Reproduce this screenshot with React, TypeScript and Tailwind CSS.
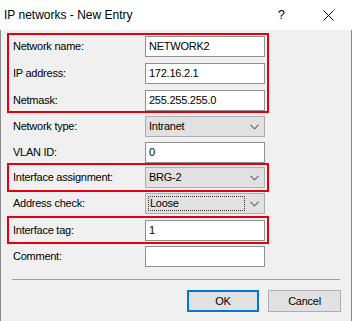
import type { ReactNode } from "react";

const font = { fontFamily: '"Segoe UI", "Liberation Sans", Arial, sans-serif' };

function Chevron() {
  return (
    <svg width="9" height="6" viewBox="0 0 9 6" className="ml-auto mr-[5px]">
      <path d="M0.5 0.8 L4.5 4.8 L8.5 0.8" fill="none" stroke="#606060" strokeWidth="1.1" />
    </svg>
  );
}

function TextBox({ value }: { value: string }) {
  return (
    <div className="flex h-[21px] w-[120px] items-center border border-[#8f8f8f] bg-white pl-[3px]">
      {value}
    </div>
  );
}

function Select({ value, focused }: { value: string; focused?: boolean }) {
  return (
    <div className="flex h-[21px] w-[120px] items-center border border-[#adadad] bg-[#e1e1e1]">
      {focused ? (
        <span className="ml-[2px] flex h-[15px] w-[97px] items-center border border-dotted border-[#333] pl-[1px]">
          {value}
        </span>
      ) : (
        <span className="pl-[3px]">{value}</span>
      )}
      <Chevron />
    </div>
  );
}

function Row({ label, children }: { label: string; children: ReactNode }) {
  return (
    <div className="flex h-[21px] items-center">
      <span className="w-[132px]">{label}</span>
      {children}
    </div>
  );
}

function Group({ children, className = "" }: { children: ReactNode; className?: string }) {
  return (
    <div className={`mx-[6px] flex w-[262px] flex-col border-2 border-[#e3000f] pl-[4px] ${className}`}>
      {children}
    </div>
  );
}

function Plain({ children, className = "" }: { children: ReactNode; className?: string }) {
  return <div className={`ml-[12px] ${className}`}>{children}</div>;
}

export default function App() {
  return (
    <div className="h-[321px] w-[352px] text-[11px] tracking-[-0.25px] text-black" style={font}>
      <div className="flex h-[30px] items-center bg-white pl-[4px] text-[12px] tracking-normal">
        <span>IP networks - New Entry</span>
        <span className="ml-auto mr-[38px] text-[13px]">?</span>
        <svg width="11" height="11" viewBox="0 0 11 11" className="mr-[18px]">
          <path d="M0.5 0.5 L10.5 10.5 M10.5 0.5 L0.5 10.5" stroke="#000" strokeWidth="1" />
        </svg>
      </div>
      <div className="flex h-[291px] flex-col border-x border-[#8a8a8a] bg-[#f0f0f0]">
        <Group className="mt-[3px] gap-[6px] pt-[1px]">
          <Row label="Network name:">
            <TextBox value="NETWORK2" />
          </Row>
          <Row label="IP address:">
            <TextBox value="172.16.2.1" />
          </Row>
          <Row label="Netmask:">
            <TextBox value="255.255.255.0" />
          </Row>
        </Group>
        <Plain className="mt-[3px]">
          <Row label="Network type:">
            <Select value="Intranet" />
          </Row>
        </Plain>
        <Plain className="mt-[5px]">
          <Row label="VLAN ID:">
            <TextBox value="0" />
          </Row>
        </Plain>
        <Group className="py-[2px]">
          <Row label="Interface assignment:">
            <Select value="BRG-2" />
          </Row>
        </Group>
        <Plain className="mt-[1px]">
          <Row label="Address check:">
            <Select value="Loose" focused />
          </Row>
        </Plain>
        <Group className="mt-[2px] pb-[1px] pt-[2px]">
          <Row label="Interface tag:">
            <TextBox value="1" />
          </Row>
        </Group>
        <Plain className="mt-[2px]">
          <Row label="Comment:">
            <TextBox value="" />
          </Row>
        </Plain>
        <div className="mx-[11px] mt-[12px] h-px bg-[#a0a0a0]" />
        <div className="mt-[10px] flex justify-end gap-[9px] pr-[10px]">
          <button className="h-[22px] w-[72px] border-2 border-[#0078d7] bg-[#e1e1e1]">OK</button>
          <button className="h-[22px] w-[73px] border border-[#adadad] bg-[#e1e1e1]">Cancel</button>
        </div>
      </div>
    </div>
  );
}
